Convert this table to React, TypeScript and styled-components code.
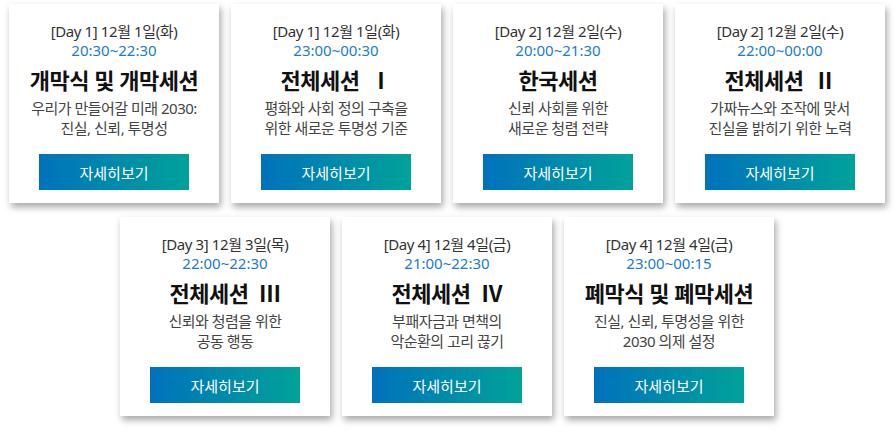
import styled, { createGlobalStyle } from "styled-components";

const GlobalStyle = createGlobalStyle`
  html, body {
    margin: 0;
    padding: 0;
    background: #fff;
  }
  body {
    font-family: "Noto Sans", "Noto Sans CJK KR", sans-serif;
  }
`;

const Grid = styled.div`
  display: flex;
  flex-wrap: wrap;
  justify-content: center;
  align-content: flex-start;
  gap: 14px 12px;
  width: 894px;
  height: 431px;
  padding-top: 4px;
  box-sizing: border-box;
`;

const Card = styled.div`
  width: 210px;
  height: 199px;
  box-sizing: border-box;
  padding: 18px 0 13px;
  background: #fff;
  box-shadow: 2px 4px 7px rgba(0, 0, 0, 0.35);
  display: flex;
  flex-direction: column;
  align-items: center;
  text-align: center;
`;

const DateLine = styled.div`
  font-size: 15px;
  line-height: 19px;
  color: #333;
  letter-spacing: -0.4px;
`;

const Time = styled.div`
  font-size: 15px;
  line-height: 19px;
  color: #1b7bcc;
`;

const Title = styled.div`
  margin-top: 5px;
  font-size: 22px;
  line-height: 30px;
  font-weight: 700;
  color: #111;
  letter-spacing: -0.5px;
  white-space: pre;
`;

const Desc = styled.div`
  margin-top: 3px;
  font-size: 15px;
  line-height: 20px;
  height: 40px;
  color: #444;
  letter-spacing: -0.5px;
`;

const Button = styled.button`
  margin-top: 16px;
  width: 150px;
  height: 36px;
  border: none;
  padding: 0;
  background: linear-gradient(to right, #0072bc, #00a29a);
  color: #fff;
  font-family: inherit;
  font-size: 15px;
  cursor: pointer;
`;

type Session = {
  date: string;
  time: string;
  title: string;
  desc: string[];
};

const sessions: Session[] = [
  {
    date: "[Day 1] 12월 1일(화)",
    time: "20:30~22:30",
    title: "개막식 및 개막세션",
    desc: ["우리가 만들어갈 미래 2030:", "진실, 신뢰, 투명성"],
  },
  {
    date: "[Day 1] 12월 1일(화)",
    time: "23:00~00:30",
    title: "전체세션  Ⅰ",
    desc: ["평화와 사회 정의 구축을", "위한 새로운 투명성 기준"],
  },
  {
    date: "[Day 2] 12월 2일(수)",
    time: "20:00~21:30",
    title: "한국세션",
    desc: ["신뢰 사회를 위한", "새로운 청렴 전략"],
  },
  {
    date: "[Day 2] 12월 2일(수)",
    time: "22:00~00:00",
    title: "전체세션  Ⅱ",
    desc: ["가짜뉴스와 조작에 맞서", "진실을 밝히기 위한 노력"],
  },
  {
    date: "[Day 3] 12월 3일(목)",
    time: "22:00~22:30",
    title: "전체세션  Ⅲ",
    desc: ["신뢰와 청렴을 위한", "공동 행동"],
  },
  {
    date: "[Day 4] 12월 4일(금)",
    time: "21:00~22:30",
    title: "전체세션  Ⅳ",
    desc: ["부패자금과 면책의", "악순환의 고리 끊기"],
  },
  {
    date: "[Day 4] 12월 4일(금)",
    time: "23:00~00:15",
    title: "폐막식 및 폐막세션",
    desc: ["진실, 신뢰, 투명성을 위한", "2030 의제 설정"],
  },
];

export default function App() {
  return (
    <>
      <GlobalStyle />
      <Grid>
        {sessions.map((s, i) => (
          <Card key={i}>
            <DateLine>{s.date}</DateLine>
            <Time>{s.time}</Time>
            <Title>{s.title}</Title>
            <Desc>
              {s.desc[0]}
              <br />
              {s.desc[1]}
            </Desc>
            <Button>자세히보기</Button>
          </Card>
        ))}
      </Grid>
    </>
  );
}
